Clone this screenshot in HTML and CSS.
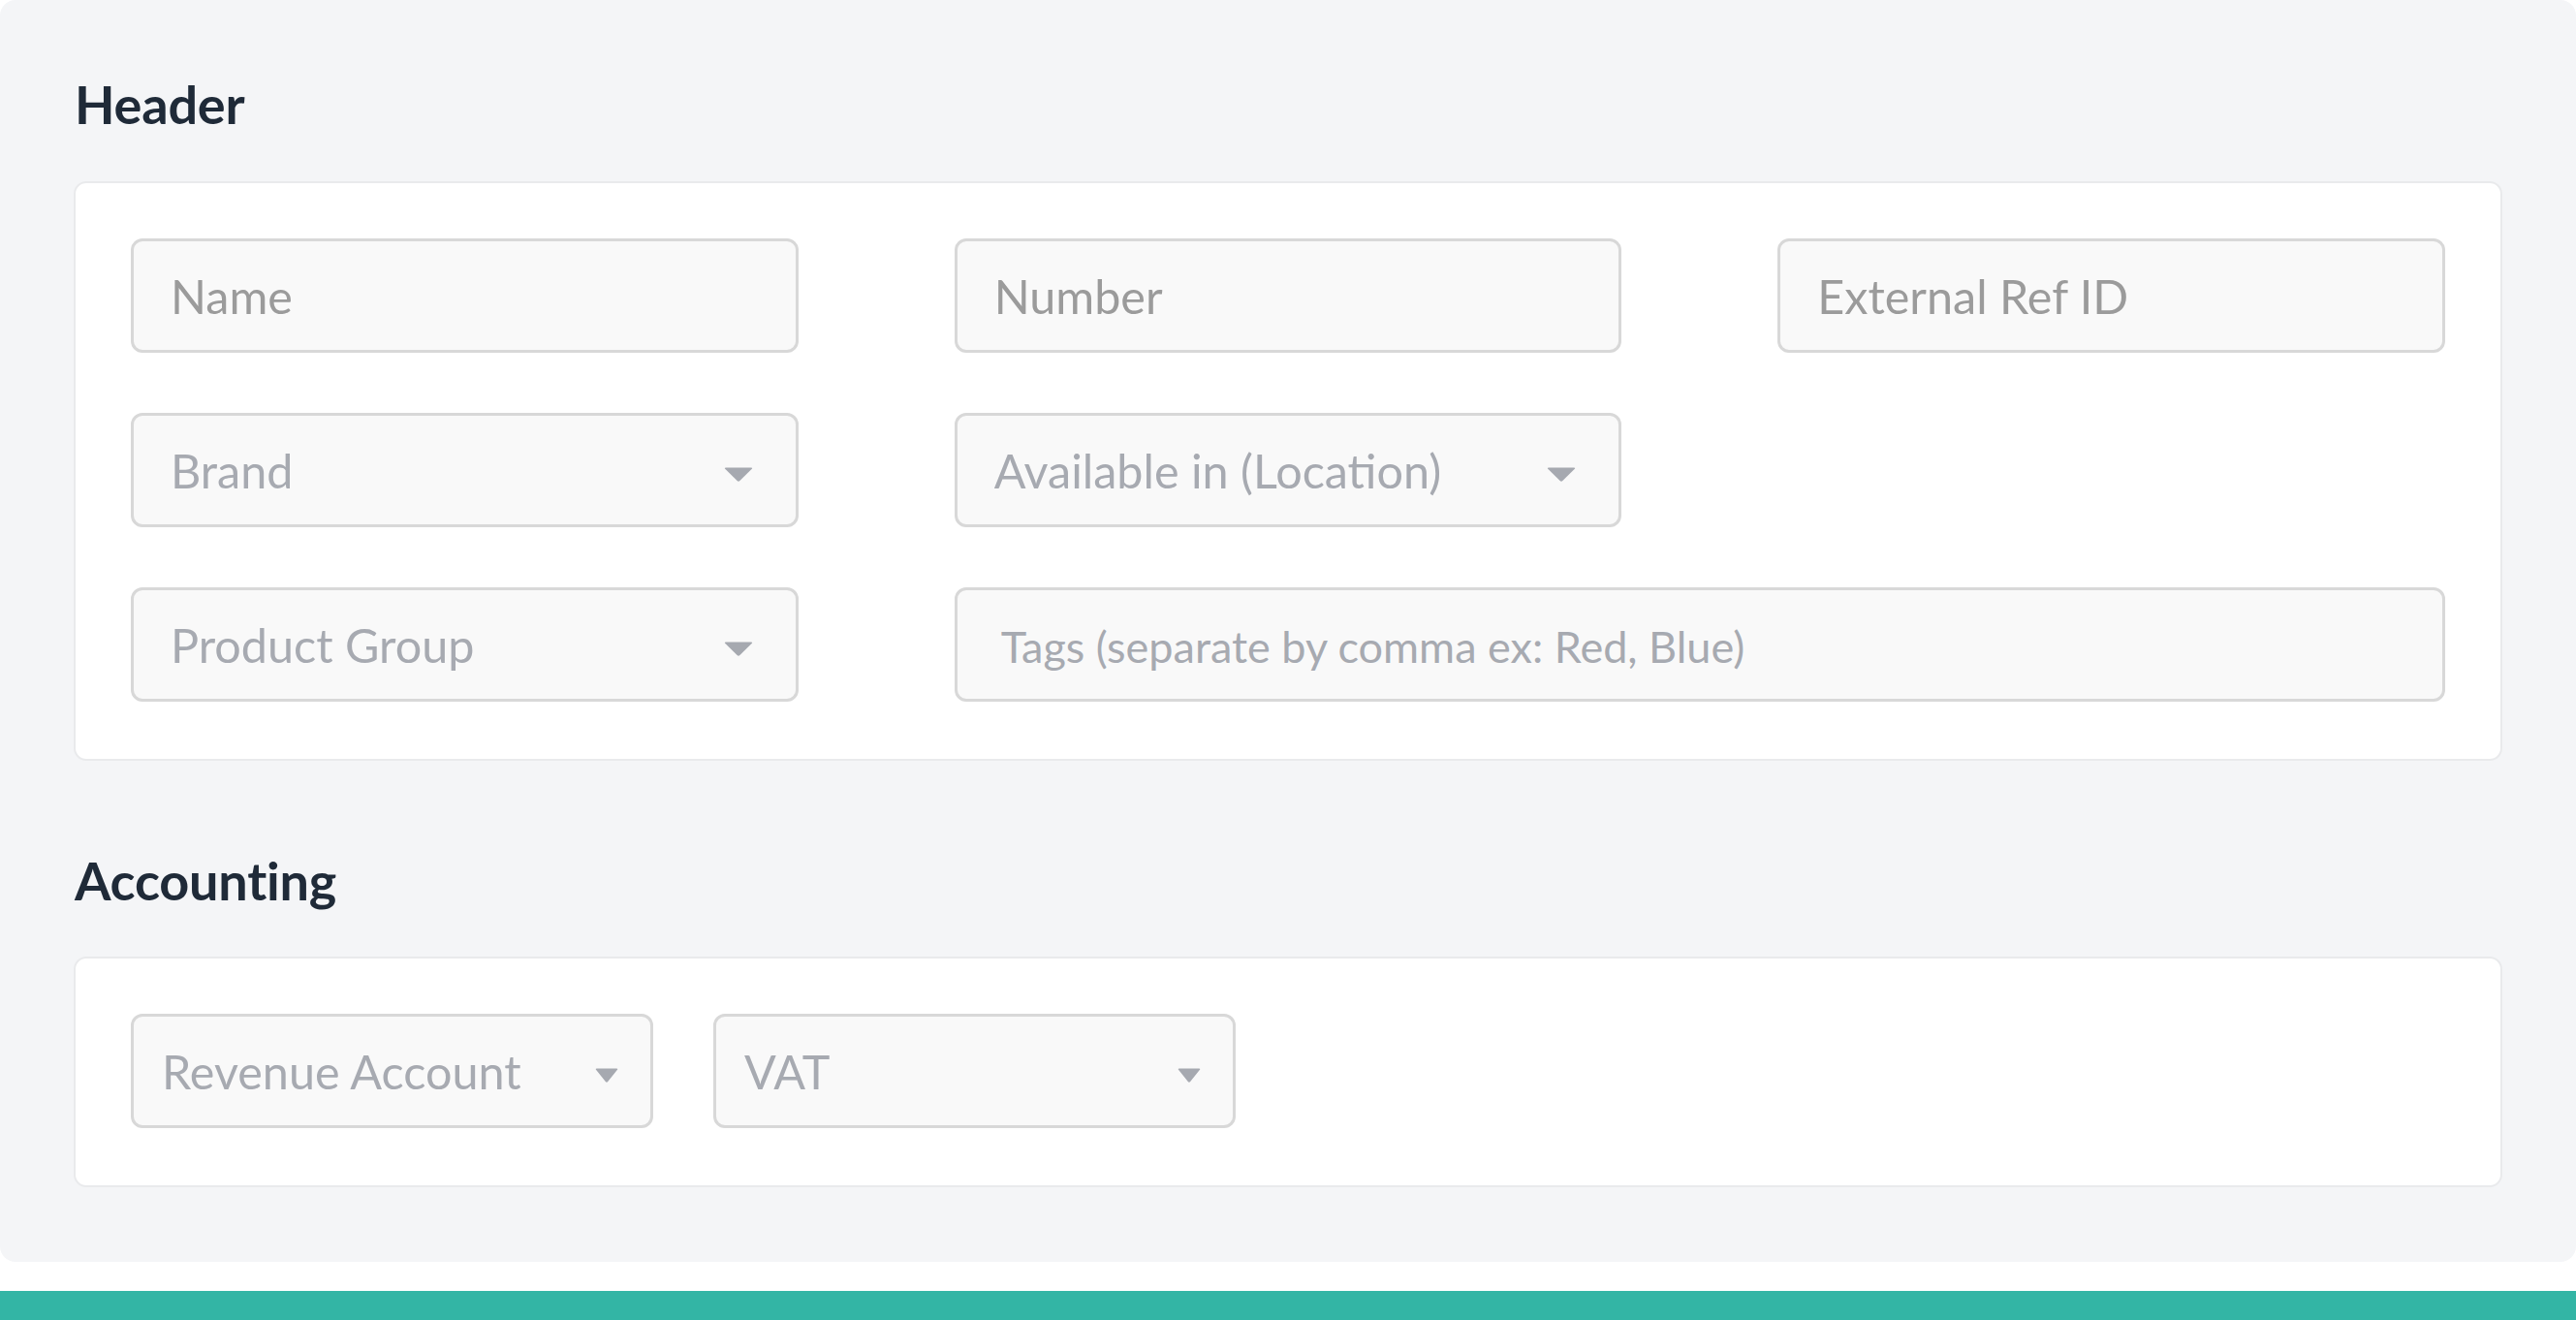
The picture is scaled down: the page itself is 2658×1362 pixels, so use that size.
FILE: index.html
```html
<!DOCTYPE html>
<html lang="en">
<head>
<meta charset="utf-8">
<title>Product form</title>
<link rel="stylesheet" href="styles.css">
</head>
<body>
<main class="panel">
  <h2 class="section-title">Header</h2>
  <section class="card">
    <div class="grid">
      <div class="field field-text"><span class="ph">Name</span></div>
      <div class="field field-text"><span class="ph">Number</span></div>
      <div class="field field-text"><span class="ph">External Ref ID</span></div>

      <div class="field field-select"><span class="ph">Brand</span>
        <svg class="caret" width="30" height="15" viewBox="0 0 30 15"><path d="M2 0.5 H28 Q30 0.5 28.6 2 L16.4 14 Q15 15.3 13.6 14 L1.4 2 Q0 0.5 2 0.5 Z" fill="#a6a9b0"/></svg>
      </div>
      <div class="field field-select"><span class="ph">Available in (Location)</span>
        <svg class="caret" width="30" height="15" viewBox="0 0 30 15"><path d="M2 0.5 H28 Q30 0.5 28.6 2 L16.4 14 Q15 15.3 13.6 14 L1.4 2 Q0 0.5 2 0.5 Z" fill="#a6a9b0"/></svg>
      </div>
      <div class="empty"></div>

      <div class="field field-select"><span class="ph">Product Group</span>
        <svg class="caret" width="30" height="15" viewBox="0 0 30 15"><path d="M2 0.5 H28 Q30 0.5 28.6 2 L16.4 14 Q15 15.3 13.6 14 L1.4 2 Q0 0.5 2 0.5 Z" fill="#a6a9b0"/></svg>
      </div>
      <div class="field field-tags span-2"><span class="ph">Tags (separate by comma ex: Red, Blue)</span></div>
    </div>
  </section>

  <h2 class="section-title section-title-next">Accounting</h2>
  <section class="card">
    <div class="row">
      <div class="field field-small"><span class="ph">Revenue Account</span>
        <svg class="caret-small" width="24" height="15" viewBox="0 0 24 15"><path d="M1.8 0.5 H22.2 Q24 0.5 22.8 2 L13.2 14 Q12 15.3 10.8 14 L1.2 2 Q0 0.5 1.8 0.5 Z" fill="#a6a9b0"/></svg>
      </div>
      <div class="field field-small"><span class="ph">VAT</span>
        <svg class="caret-small" width="24" height="15" viewBox="0 0 24 15"><path d="M1.8 0.5 H22.2 Q24 0.5 22.8 2 L13.2 14 Q12 15.3 10.8 14 L1.2 2 Q0 0.5 1.8 0.5 Z" fill="#a6a9b0"/></svg>
      </div>
    </div>
  </section>
</main>
<div class="spacer"></div>
<footer class="bottom-bar"></footer>
</body>
</html>
```

FILE: styles.css
```css
* {
  box-sizing: border-box;
}

html, body {
  margin: 0;
  padding: 0;
  background: #ffffff;
  font-family: "Lato", "Noto Sans", "Liberation Sans", sans-serif;
}

body {
  width: 2658px;
  height: 1362px;
  overflow: hidden;
}

.panel {
  display: block;
  background: #f4f5f7;
  border-radius: 16px;
  padding: 74px 76px 76px 76px;
  height: 1302px;
}

.section-title {
  margin: 0 0 45px 0;
  padding-left: 1px;
  font-size: 54px;
  line-height: 68px;
  font-weight: 700;
  letter-spacing: -0.2px;
  color: #1f2a38;
}

.section-title-next {
  margin-top: 90px;
  margin-bottom: 44px;
}

.card {
  background: #ffffff;
  border: 2px solid #e9eaec;
  border-radius: 13px;
  padding: 57px 57px 59px 57px;
}

.grid {
  display: grid;
  grid-template-columns: repeat(3, 1fr);
  column-gap: 161px;
  row-gap: 62px;
}

.span-2 {
  grid-column: span 2;
}

.field {
  height: 118px;
  background: #f9f9f9;
  border: 3px solid #d8d8d8;
  border-radius: 12px;
  display: flex;
  align-items: center;
  justify-content: space-between;
  font-size: 48.5px;
  line-height: 1.2;
}

.field-text {
  padding: 0 38px;
  color: #9b9b9b;
}

.field-select {
  padding: 0 44px 0 38px;
  color: #a7aab1;
}

.field-tags {
  padding: 4px 44px 0 45px;
  font-size: 45px;
  color: #a7aab1;
}

.caret {
  flex: none;
  margin-top: 9px;
}

.row {
  display: flex;
  gap: 62px;
}

.field-small {
  width: 539px;
  padding: 0 33px 0 29px;
  color: #a7aab1;
}

.caret-small {
  flex: none;
  margin-top: 9px;
}

.spacer {
  height: 30px;
}

.bottom-bar {
  height: 30px;
  background: #33b5a5;
}
```
